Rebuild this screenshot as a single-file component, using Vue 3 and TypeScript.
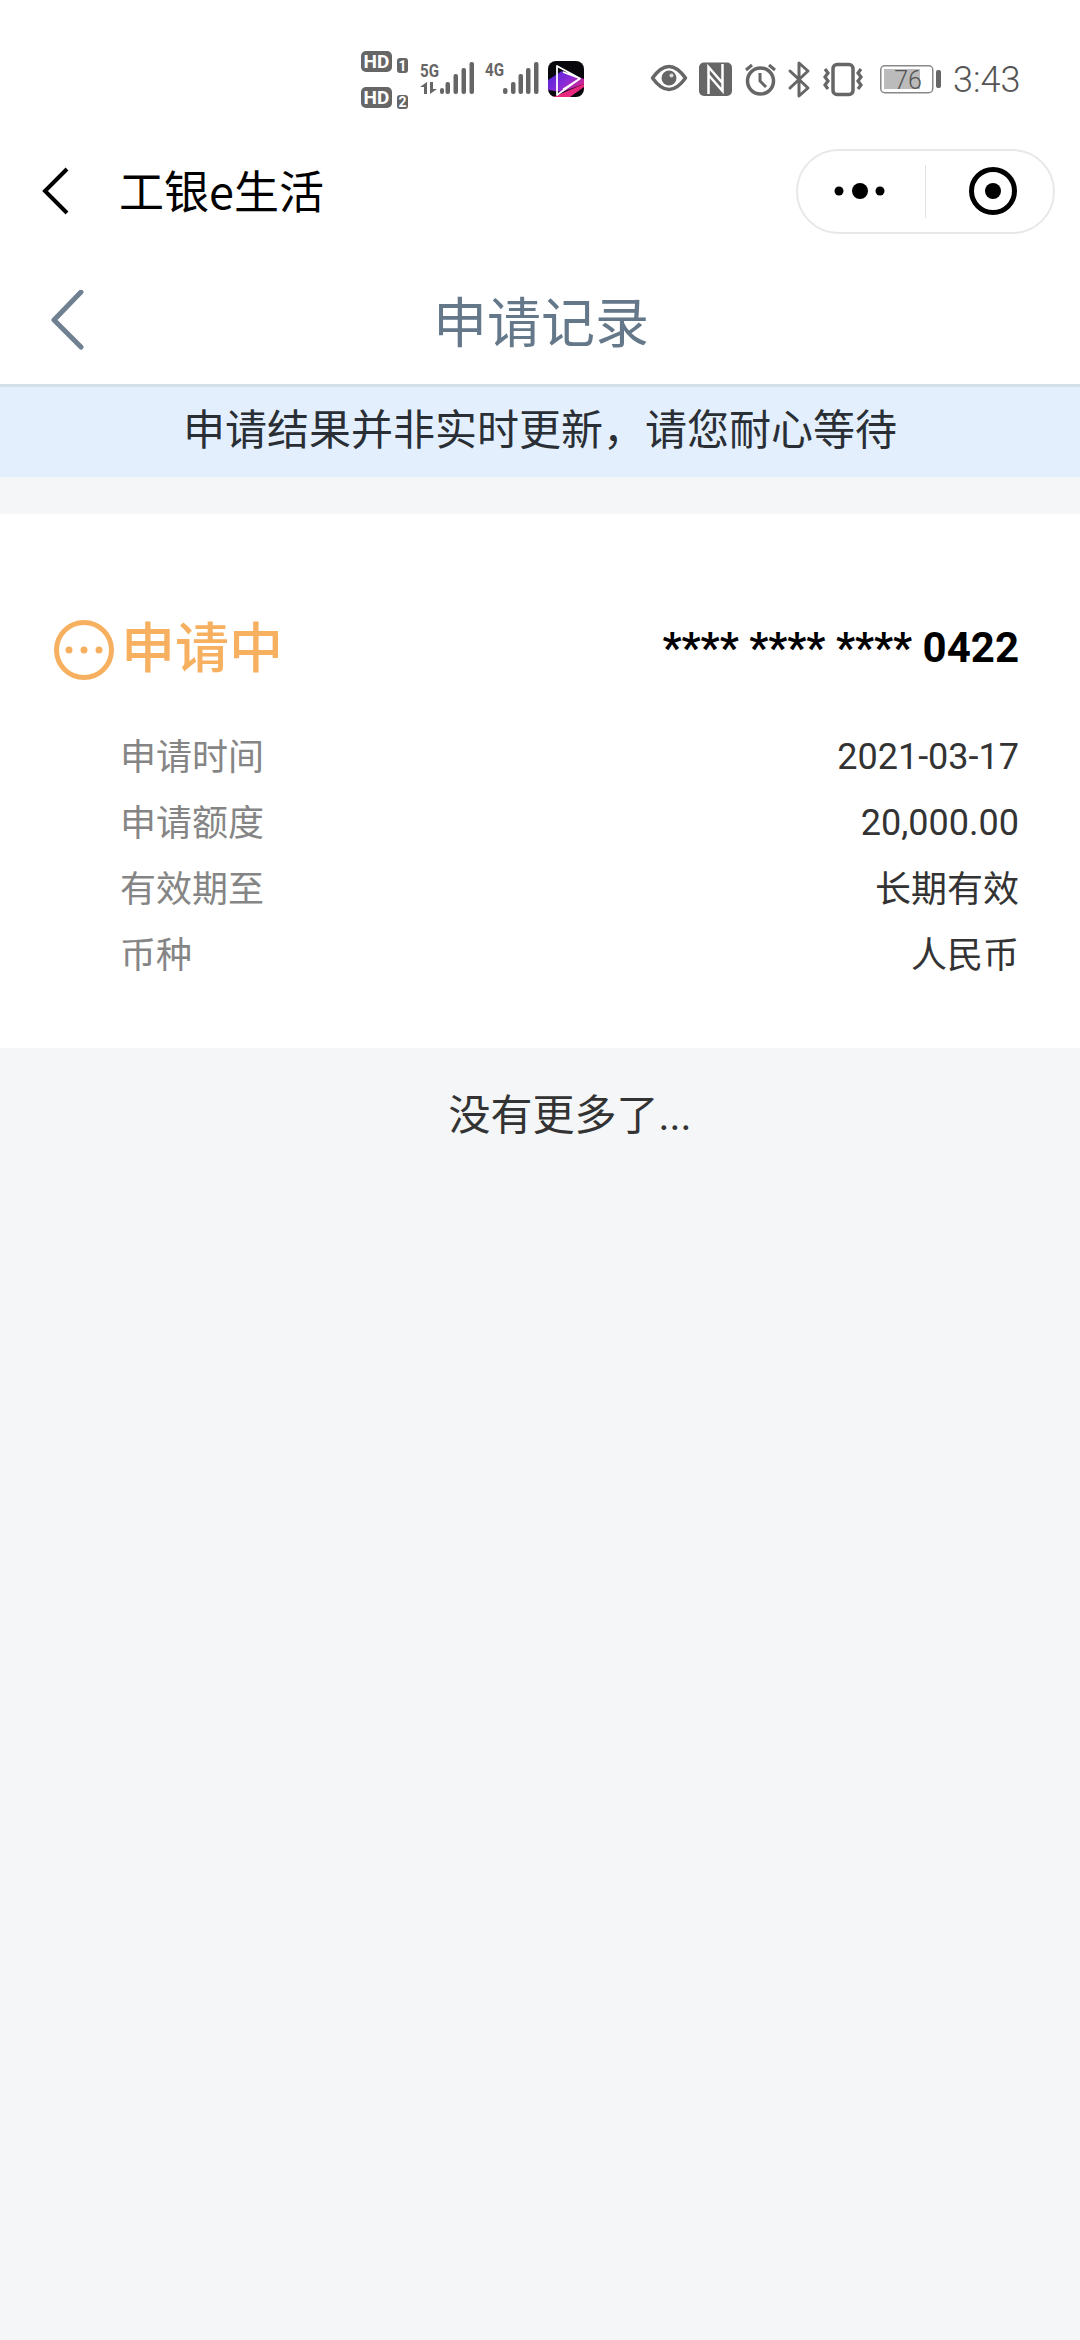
<script setup lang="ts">
interface Row { label: string; value: string; cjk: boolean }
const rows: Row[] = [
  { label: '申请时间', value: '2021-03-17', cjk: false },
  { label: '申请额度', value: '20,000.00', cjk: false },
  { label: '有效期至', value: '长期有效', cjk: true },
  { label: '币种', value: '人民币', cjk: true },
]
</script>

<template>
  <div class="page">
    <div class="status">
      <svg class="s-left" width="226" height="60" viewBox="360 50 226 60">
        <defs>
          <linearGradient id="appg" x1="0" y1="0" x2="1" y2="0.6">
            <stop offset="0" stop-color="#4a22d8" />
            <stop offset="0.6" stop-color="#8a2bd8" />
            <stop offset="1" stop-color="#d0258f" />
          </linearGradient>
          <clipPath id="appc">
            <rect x="548" y="61" width="36" height="36" rx="8" />
          </clipPath>
        </defs>
        <g font-family="Roboto, sans-serif" font-weight="700" text-anchor="middle">
          <rect x="361" y="51" width="31" height="21" rx="5" fill="#666" />
          <text x="376.5" y="68" font-size="19" fill="#fff">HD</text>
          <rect x="397" y="58" width="11" height="15" rx="3" fill="#666" />
          <text x="402.5" y="70.5" font-size="14" fill="#fff">1</text>
          <rect x="361" y="87" width="31" height="21" rx="5" fill="#666" />
          <text x="376.5" y="104" font-size="19" fill="#fff">HD</text>
          <rect x="397" y="95" width="11" height="14" rx="3" fill="#666" />
          <text x="402.5" y="107" font-size="14" fill="#fff">2</text>
          <text x="429.5" y="77" font-size="19" fill="#666" textLength="19" lengthAdjust="spacingAndGlyphs">5G</text>
          <text x="494.5" y="76" font-size="19" fill="#666" textLength="19" lengthAdjust="spacingAndGlyphs">4G</text>
        </g>
        <g fill="#666">
          <path d="M420 87l7-5v12h-3v-7zM430 82h3v7l4 0-7 5z" />
          <rect x="440" y="88" width="4" height="6" rx="2" />
          <rect x="445.500" y="82" width="4.500" height="12" rx="2" />
          <rect x="453.500" y="74" width="4.500" height="20" rx="2" />
          <rect x="461.500" y="68" width="4.500" height="26" rx="2" />
          <rect x="469.500" y="62" width="4.500" height="32" rx="2" />
          <rect x="503" y="88" width="4.500" height="6" rx="2" />
          <rect x="511" y="82" width="4.500" height="12" rx="2" />
          <rect x="518.500" y="74" width="4.500" height="20" rx="2" />
          <rect x="526" y="68" width="4.500" height="26" rx="2" />
          <rect x="534" y="62" width="4.500" height="32" rx="2" />
        </g>
        <g clip-path="url(#appc)">
          <rect x="548" y="61" width="36" height="36" fill="#08080c" />
          <path d="M548 80l14-9 22 8v5l-22 8-14-2z" fill="url(#appg)" />
          <path d="M553 97l31-13v3l-14 10z" fill="#e8287e" />
        </g>
        <path d="M557 66l23 12.500-23 16.500zM563 72l17 6.500-17 11" fill="none" stroke="#fff" stroke-width="1.800" stroke-linejoin="round" />
      </svg>

      <svg class="s-right" width="292" height="40" viewBox="650 60 292 40">
        <path d="M652.500 78q16.500-23 33 0q-16.500 23-33 0z" fill="none" stroke="#666" stroke-width="3.500" stroke-linejoin="round" />
        <circle cx="669" cy="78" r="7.500" fill="#666" />
        <circle cx="671.500" cy="75.500" r="2" fill="#ddd" />

        <rect x="699" y="62.500" width="33" height="33.500" rx="5" fill="#666" />
        <path d="M708.500 94V67l14 16M722.500 64v27l-14-16" fill="none" stroke="#fff" stroke-width="2.500" />

        <circle cx="760.500" cy="81" r="13" fill="none" stroke="#666" stroke-width="3.500" />
        <path d="M760 73v8l6 6M746 70l6-5M769 65l6 5" fill="none" stroke="#666" stroke-width="3" />

        <path d="M790 71l18 17-9 8V63l9 8-18 17" fill="none" stroke="#666" stroke-width="3" stroke-linejoin="round" stroke-linecap="round" />

        <rect x="833" y="64.500" width="20" height="30" rx="4" fill="none" stroke="#666" stroke-width="3.500" />
        <path d="M825 69l3 4-3 4 3 4-3 4 3 4M861 69l-3 4 3 4-3 4 3 4-3 4" fill="none" stroke="#666" stroke-width="3.200" />

        <rect x="880.750" y="65.750" width="52" height="27" rx="4" fill="none" stroke="#888" stroke-width="1.500" />
        <rect x="884" y="69" width="36" height="20" fill="#bbb" />
        <text x="908" y="89" font-size="25" font-family="Roboto, sans-serif" font-weight="300" fill="#555" text-anchor="middle">76</text>
        <rect x="936" y="70" width="5" height="18" rx="2" fill="#666" />
      </svg>
      <span class="time">3:43</span>
    </div>

    <div class="nav">
      <svg class="nav-back" width="30" height="50" viewBox="0 0 30 50">
        <path d="M25 3L3 25l22 22" fill="none" stroke="#000" stroke-width="4" />
      </svg>
      <span class="nav-title">工银e生活</span>
      <div class="capsule">
        <svg width="64" height="20" viewBox="0 0 64 20">
          <circle cx="11" cy="10" r="4.500" fill="#000" />
          <circle cx="32" cy="10" r="8" fill="#000" />
          <circle cx="52" cy="10" r="4.500" fill="#000" />
        </svg>
        <span class="capsule-div"></span>
        <svg width="48" height="48" viewBox="0 0 48 48">
          <circle cx="24" cy="24" r="21.500" fill="none" stroke="#000" stroke-width="5" />
          <circle cx="24" cy="24" r="8" fill="#000" />
        </svg>
      </div>
    </div>

    <header class="head">
      <svg class="head-back" width="34" height="60" viewBox="0 0 34 60">
        <path d="M31 2L4 30l27 27" fill="none" stroke="#6f8090" stroke-width="5" stroke-linecap="round" stroke-linejoin="round" />
      </svg>
      <h1 class="head-title">申请记录</h1>
    </header>

    <div class="banner">申请结果并非实时更新，请您耐心等待</div>

    <section class="card">
      <div class="card-top">
        <div class="state">
          <svg class="state-icon" width="60" height="60" viewBox="0 0 60 60">
            <circle cx="30" cy="30" r="27.500" fill="none" stroke="#f6b060" stroke-width="5" />
            <circle cx="15" cy="30" r="3.500" fill="#f6b060" />
            <circle cx="30" cy="30" r="3.500" fill="#f6b060" />
            <circle cx="45" cy="30" r="3.500" fill="#f6b060" />
          </svg>
          <span class="state-text">申请中</span>
        </div>
        <div class="cardno">**** **** **** 0422</div>
      </div>
      <div class="rows">
        <div v-for="r in rows" :key="r.label" class="row">
          <span class="row-label">{{ r.label }}</span>
          <span class="row-value" :class="{ 'row-cjk': r.cjk }">{{ r.value }}</span>
        </div>
      </div>
    </section>

    <div class="more">没有更多了...</div>
  </div>
</template>

<style scoped>
.page {
  width: 1080px;
  min-height: 2340px;
  background: #f5f6f8;
  font-family: Roboto, "Noto Sans CJK SC", sans-serif;
  color: #333;
}
.status {
  height: 148px;
  background: #fff;
  display: flex;
  align-items: flex-start;
  box-sizing: border-box;
  padding: 50px 0 0 360px;
}
.s-right {
  margin: 10px 0 0 64px;
}
.time {
  margin: 8px 0 0 11px;
  font-size: 36px;
  line-height: 44px;
  font-weight: 300;
  color: #555;
}
.nav {
  height: 86px;
  background: #fff;
  display: flex;
  align-items: center;
  padding: 0 25px 0 42px;
}
.nav-back {
  flex: none;
}
.nav-title {
  margin-left: 47px;
  padding-bottom: 3px;
  font-size: 45px;
  color: #000;
  font-family: "Noto Sans CJK SC", sans-serif;
  flex: 1;
}
.capsule {
  width: 259px;
  height: 85px;
  box-sizing: border-box;
  border: 2px solid #e8e8e8;
  border-radius: 43px;
  display: flex;
  align-items: center;
  padding-left: 30px;
}
.capsule-div {
  width: 1px;
  height: 53px;
  background: #e2e2e2;
  margin: 0 43px 0 33px;
}
.head {
  height: 153px;
  background: #fff;
  box-sizing: border-box;
  border-bottom: 3px solid #d3dfe6;
  display: flex;
  align-items: center;
  padding: 22px 0 0 50px;
}
.head-back {
  flex: none;
}
.head-title {
  margin: 0 0 0 349px;
  font-size: 54px;
  line-height: 70px;
  font-weight: 400;
  color: #64788a;
  font-family: "Noto Sans CJK SC", sans-serif;
}
.banner {
  height: 90px;
  box-sizing: border-box;
  padding-bottom: 12px;
  background: #e4effd;
  display: flex;
  align-items: center;
  justify-content: center;
  font-size: 42px;
  color: #2a2f36;
  font-family: "Noto Sans CJK SC", sans-serif;
}
.card {
  margin-top: 37px;
  height: 534px;
  background: #fff;
  box-sizing: border-box;
  padding: 96px 61px 0 54px;
}
.card-top {
  display: flex;
  justify-content: space-between;
  align-items: center;
  height: 72px;
}
.state {
  display: flex;
  align-items: center;
  gap: 7px;
  font-size: 54px;
  font-weight: 500;
  color: #f6b060;
  font-family: "Noto Sans CJK SC", sans-serif;
}
.state-icon {
  margin-top: 8px;
}
.state-text {
  padding-bottom: 3px;
}
.cardno {
  margin-top: 3px;
  font-size: 42px;
  font-weight: 700;
  color: #000;
}
.rows {
  margin-top: 42px;
  padding-left: 66px;
}
.row {
  height: 66px;
  display: flex;
  justify-content: space-between;
  align-items: center;
  font-size: 36px;
}
.row-label {
  color: #858585;
  padding-bottom: 6px;
}
.row-value {
  color: #333;
}
.row-cjk {
  padding-bottom: 6px;
}
.more {
  margin-top: 40px;
  padding-left: 60px;
  text-align: center;
  font-size: 42px;
  line-height: 56px;
  color: #333;
}
</style>
